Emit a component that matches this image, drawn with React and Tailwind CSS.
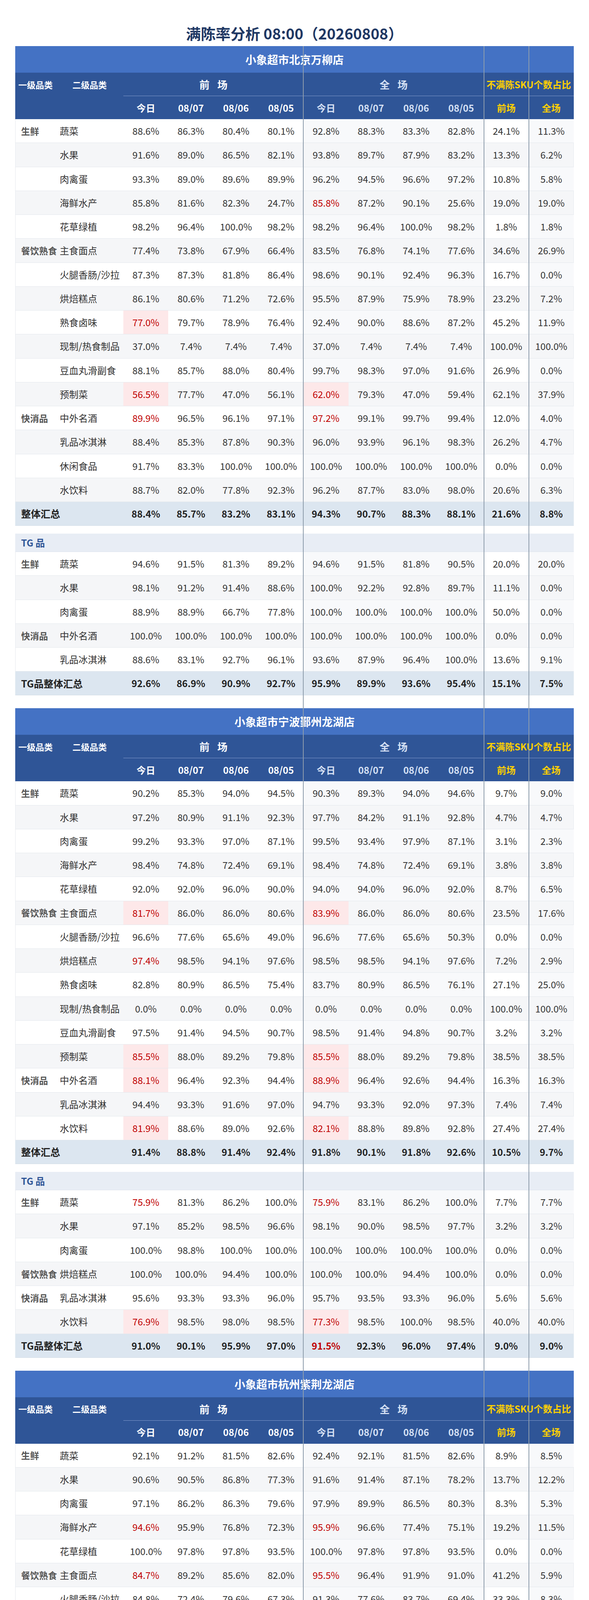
import React from "react";

const GRID = "grid grid-cols-[104px_173px_repeat(10,minmax(0,1fr))]";

const stores = [
  {
    name: "小象超市北京万柳店",
    main: [
      ["生鲜", "蔬菜", "88.6 86.3 80.4 80.1 92.8 88.3 83.3 82.8 24.1 11.3"],
      ["", "水果", "91.6 89.0 86.5 82.1 93.8 89.7 87.9 83.2 13.3 6.2"],
      ["", "肉禽蛋", "93.3 89.0 89.6 89.9 96.2 94.5 96.6 97.2 10.8 5.8"],
      ["", "海鲜水产", "85.8 81.6 82.3 24.7 85.8! 87.2 90.1 25.6 19.0 19.0"],
      ["", "花草绿植", "98.2 96.4 100.0 98.2 98.2 96.4 100.0 98.2 1.8 1.8"],
      ["餐饮熟食", "主食面点", "77.4 73.8 67.9 66.4 83.5 76.8 74.1 77.6 34.6 26.9"],
      ["", "火腿香肠/沙拉", "87.3 87.3 81.8 86.4 98.6 90.1 92.4 96.3 16.7 0.0"],
      ["", "烘焙糕点", "86.1 80.6 71.2 72.6 95.5 87.9 75.9 78.9 23.2 7.2"],
      ["", "熟食卤味", "77.0!* 79.7 78.9 76.4 92.4 90.0 88.6 87.2 45.2 11.9"],
      ["", "现制/热食制品", "37.0 7.4 7.4 7.4 37.0 7.4 7.4 7.4 100.0 100.0"],
      ["", "豆血丸滑副食", "88.1 85.7 88.0 80.4 99.7 98.3 97.0 91.6 26.9 0.0"],
      ["", "预制菜", "56.5!* 77.7 47.0 56.1 62.0!* 79.3 47.0 59.4 62.1 37.9"],
      ["快消品", "中外名酒", "89.9! 96.5 96.1 97.1 97.2! 99.1 99.7 99.4 12.0 4.0"],
      ["", "乳品冰淇淋", "88.4 85.3 87.8 90.3 96.0 93.9 96.1 98.3 26.2 4.7"],
      ["", "休闲食品", "91.7 83.3 100.0 100.0 100.0 100.0 100.0 100.0 0.0 0.0"],
      ["", "水饮料", "88.7 82.0 77.8 92.3 96.2 87.7 83.0 98.0 20.6 6.3"],
    ],
    total: "88.4 85.7 83.2 83.1 94.3 90.7 88.3 88.1 21.6 8.8",
    tg: [
      ["生鲜", "蔬菜", "94.6 91.5 81.3 89.2 94.6 91.5 81.8 90.5 20.0 20.0"],
      ["", "水果", "98.1 91.2 91.4 88.6 100.0 92.2 92.8 89.7 11.1 0.0"],
      ["", "肉禽蛋", "88.9 88.9 66.7 77.8 100.0 100.0 100.0 100.0 50.0 0.0"],
      ["快消品", "中外名酒", "100.0 100.0 100.0 100.0 100.0 100.0 100.0 100.0 0.0 0.0"],
      ["", "乳品冰淇淋", "88.6 83.1 92.7 96.1 93.6 87.9 96.4 100.0 13.6 9.1"],
    ],
    tgTotal: "92.6 86.9 90.9 92.7 95.9 89.9 93.6 95.4 15.1 7.5",
  },
  {
    name: "小象超市宁波鄞州龙湖店",
    main: [
      ["生鲜", "蔬菜", "90.2 85.3 94.0 94.5 90.3 89.3 94.0 94.6 9.7 9.0"],
      ["", "水果", "97.2 80.9 91.1 92.3 97.7 84.2 91.1 92.8 4.7 4.7"],
      ["", "肉禽蛋", "99.2 93.3 97.0 87.1 99.5 93.4 97.9 87.1 3.1 2.3"],
      ["", "海鲜水产", "98.4 74.8 72.4 69.1 98.4 74.8 72.4 69.1 3.8 3.8"],
      ["", "花草绿植", "92.0 92.0 96.0 90.0 94.0 94.0 96.0 92.0 8.7 6.5"],
      ["餐饮熟食", "主食面点", "81.7!* 86.0 86.0 80.6 83.9!* 86.0 86.0 80.6 23.5 17.6"],
      ["", "火腿香肠/沙拉", "96.6 77.6 65.6 49.0 96.6 77.6 65.6 50.3 0.0 0.0"],
      ["", "烘焙糕点", "97.4! 98.5 94.1 97.6 98.5 98.5 94.1 97.6 7.2 2.9"],
      ["", "熟食卤味", "82.8 80.9 86.5 75.4 83.7 80.9 86.5 76.1 27.1 25.0"],
      ["", "现制/热食制品", "0.0 0.0 0.0 0.0 0.0 0.0 0.0 0.0 100.0 100.0"],
      ["", "豆血丸滑副食", "97.5 91.4 94.5 90.7 98.5 91.4 94.8 90.7 3.2 3.2"],
      ["", "预制菜", "85.5!* 88.0 89.2 79.8 85.5!* 88.0 89.2 79.8 38.5 38.5"],
      ["快消品", "中外名酒", "88.1!* 96.4 92.3 94.4 88.9!* 96.4 92.6 94.4 16.3 16.3"],
      ["", "乳品冰淇淋", "94.4 93.3 91.6 97.0 94.7 93.3 92.0 97.3 7.4 7.4"],
      ["", "水饮料", "81.9!* 88.6 89.0 92.6 82.1!* 88.8 89.8 92.8 27.4 27.4"],
    ],
    total: "91.4 88.8 91.4 92.4 91.8 90.1 91.8 92.6 10.5 9.7",
    tg: [
      ["生鲜", "蔬菜", "75.9! 81.3 86.2 100.0 75.9! 83.1 86.2 100.0 7.7 7.7"],
      ["", "水果", "97.1 85.2 98.5 96.6 98.1 90.0 98.5 97.7 3.2 3.2"],
      ["", "肉禽蛋", "100.0 98.8 100.0 100.0 100.0 100.0 100.0 100.0 0.0 0.0"],
      ["餐饮熟食", "烘焙糕点", "100.0 100.0 94.4 100.0 100.0 100.0 94.4 100.0 0.0 0.0"],
      ["快消品", "乳品冰淇淋", "95.6 93.3 93.3 96.0 95.7 93.5 93.3 96.0 5.6 5.6"],
      ["", "水饮料", "76.9!* 98.5 98.0 98.5 77.3!* 98.5 100.0 98.5 40.0 40.0"],
    ],
    tgTotal: "91.0 90.1 95.9 97.0 91.5! 92.3 96.0 97.4 9.0 9.0",
  },
  {
    name: "小象超市杭州紫荆龙湖店",
    main: [
      ["生鲜", "蔬菜", "92.1 91.2 81.5 82.6 92.4 92.1 81.5 82.6 8.9 8.5"],
      ["", "水果", "90.6 90.5 86.8 77.3 91.6 91.4 87.1 78.2 13.7 12.2"],
      ["", "肉禽蛋", "97.1 86.2 86.3 79.6 97.9 89.9 86.5 80.3 8.3 5.3"],
      ["", "海鲜水产", "94.6! 95.9 76.8 72.3 95.9! 96.6 77.4 75.1 19.2 11.5"],
      ["", "花草绿植", "100.0 97.8 97.8 93.5 100.0 97.8 97.8 93.5 0.0 0.0"],
      ["餐饮熟食", "主食面点", "84.7! 89.2 85.6 82.0 95.5! 96.4 91.9 91.0 41.2 5.9"],
      ["", "火腿香肠/沙拉", "84.8 72.4 79.6 67.3 91.3 77.6 83.7 69.4 33.3 8.3"],
      ["", "烘焙糕点", "97.1 96.5 92.3 83.7 97.5 97.0 92.8 84.2 7.2 7.2"],
      ["", "熟食卤味", "80.5!* 80.7 84.1 77.6 88.8 87.5 89.8 86.2 31.9 21.3"],
      ["", "现制/热食制品", "16.7 16.7 16.7 16.7 16.7 16.7 16.7 16.7 100.0 100.0"],
      ["", "豆血丸滑副食", "94.6 93.9 94.9 94.1 98.1 96.5 96.1 95.6 22.6 3.2"],
      ["", "预制菜", "75.1 64.4 65.6 64.7 75.7 65.3 65.9 65.0 59.3 55.6"],
      ["快消品", "中外名酒", "95.6! 96.1 91.1 93.7 97.9 96.4 93.1 93.8 33.3 31.2"],
      ["", "乳品冰淇淋", "90.9 89.1 89.0 93.4 91.7 90.2 90.4 94.1 9.8 8.4"],
      ["", "水饮料", "94.9 88.1 86.5 87.9 95.5 88.5 87.7 88.7 5.3 5.3"],
    ],
    total: "92.0 89.3 86.7 86.2 93.2 90.6 87.9 87.2 13.9 10.8",
    tg: [
      ["生鲜", "蔬菜", "100.0 100.0 78.8 81.6 100.0 100.0 78.8 81.6 0.0 0.0"],
      ["", "水果", "99.8 96.9 90.0 81.1 100.0 96.9 90.0 83.5 0.0 0.0"],
      ["餐饮熟食", "熟食卤味", "92.3! 96.2 84.6 88.5 100.0 100.0 100.0 92.3 0.0 0.0"],
      ["", "预制菜", "70.6 23.5 35.3 23.5 70.6 23.5 35.3 23.5 100.0 100.0"],
      ["快消品", "乳品冰淇淋", "93.1 88.2 83.0 94.5 93.3 89.6 84.7 95.5 5.0 5.0"],
      ["", "水饮料", "98.9! 99.4 90.5 95.0 100.0 100.0 90.5 95.5 0.0 0.0"],
    ],
    tgTotal: "95.0 91.2 84.6 90.1 95.4 92.1 85.8 91.3 4.8 4.8",
  },
];

function parse(s) {
  return s.split(" ").map((t) => ({
    v: t.replace(/[!*]/g, "") + "%",
    red: t.includes("!"),
    pink: t.includes("*"),
  }));
}

function HeaderRows() {
  const dates = ["今日", "08/07", "08/06", "08/05"];
  return (
    <div className="bg-[#2f5597]">
      <div className={`${GRID} h-[60px]`}>
        <div className="flex items-center justify-center text-[22px] font-bold text-white whitespace-nowrap">一级品类</div>
        <div className="flex items-center justify-center text-[22px] font-bold text-white whitespace-nowrap">二级品类</div>
        <div className="col-span-4 flex items-center justify-center border-b border-[#8199cc] text-[26px] font-bold text-white [word-spacing:14px]">前 场</div>
        <div className="col-span-4 flex items-center justify-center border-b border-[#8199cc] text-[26px] font-bold text-[#d5e0f4] [word-spacing:14px]">全 场</div>
        <div className="col-span-2 flex items-center justify-center border-b border-[#8199cc] text-[24px] font-bold text-[#ffd000] whitespace-nowrap">不满陈SKU个数占比</div>
      </div>
      <div className={`${GRID} h-[59px]`}>
        <div className="col-span-2" />
        {dates.map((d) => (
          <div key={"a" + d} className="flex items-center justify-center text-[24px] font-bold text-white">{d}</div>
        ))}
        {dates.map((d) => (
          <div key={"b" + d} className="flex items-center justify-center text-[24px] font-bold text-[#d5e0f4]">{d}</div>
        ))}
        <div className="flex items-center justify-center text-[24px] font-bold text-[#ffd000]">前场</div>
        <div className="flex items-center justify-center text-[24px] font-bold text-[#ffd000]">全场</div>
      </div>
    </div>
  );
}

function BodyRow({ row, idx }) {
  const [l1, l2, vals] = row;
  const gray = idx % 2 === 1;
  const cells = parse(vals);
  return (
    <div
      className={`${GRID} h-[61.25px] overflow-hidden border-b border-[#e4e8ed] shadow-[inset_1px_0_0_#e6e9ee,inset_-1px_0_0_#e6e9ee] ${
        gray ? "bg-[#f5f6f8]" : "bg-white"
      }`}
    >
      <div className="flex items-center pl-[15px] text-[23px] font-bold text-[#555555] whitespace-nowrap">{l1}</div>
      <div className="flex items-center pl-[10px] text-[24px] text-[#333333] whitespace-nowrap">{l2}</div>
      {cells.map((c, j) => {
        const tint = !gray && ((j >= 4 && j <= 7) || j === 9);
        const bg = c.pink ? "bg-[#fde8e9]" : tint ? "bg-[#f8f9fb]" : "";
        return (
          <div
            key={j}
            className={`flex items-center justify-center text-[24px] whitespace-nowrap ${bg} ${
              c.red ? "text-[#c00000]" : "text-[#333333]"
            }`}
          >
            {c.v}
          </div>
        );
      })}
    </div>
  );
}

function TotalRow({ label, vals }) {
  const cells = parse(vals);
  return (
    <div className={`${GRID} h-[61px] overflow-hidden border-b border-[#d3dce6] bg-[#dce6f0]`}>
      <div className="col-span-2 flex items-center pl-[15px] text-[25px] font-bold text-[#222222] whitespace-nowrap">{label}</div>
      {cells.map((c, j) => (
        <div
          key={j}
          className={`flex items-center justify-center text-[24px] font-bold whitespace-nowrap ${
            c.red ? "text-[#c00000]" : "text-[#222222]"
          }`}
        >
          {c.v}
        </div>
      ))}
    </div>
  );
}

function Store({ store, first }) {
  return (
    <section className={first ? "" : "mt-[33px]"}>
      <div className="flex h-[68px] items-center justify-center bg-[#4472c4] text-[28px] font-bold text-white">{store.name}</div>
      <HeaderRows />
      {store.main.map((r, i) => (
        <BodyRow key={i} row={r} idx={i} />
      ))}
      <TotalRow label="整体汇总" vals={store.total} />
      <div className="mt-[20px]">
        <div className="flex h-[47px] items-center border-b border-[#dde3ec] bg-[#e8edf5] pl-[15px] text-[24px] font-bold text-[#2f5597]">TG 品</div>
        {store.tg.map((r, i) => (
          <BodyRow key={i} row={r} idx={i} />
        ))}
        <TotalRow label="TG品整体汇总" vals={store.tgTotal} />
      </div>
    </section>
  );
}

export default function App() {
  return (
    <div className="w-full bg-white font-['Noto_Sans_CJK_SC','Noto_Sans',sans-serif]">
      <h1 className="pt-[60px] pb-[8px] text-center text-[38px] font-bold leading-[50px] text-[#1f3864]">满陈率分析 08:00（20260808）</h1>
      <div className="relative mx-auto w-[1431px]">
        {stores.map((s, i) => (
          <Store key={s.name} store={s} first={i === 0} />
        ))}
        <div className="pointer-events-none absolute inset-y-0 left-[737px] z-10 w-[2px] bg-[#8e9dac]" />
        <div className="pointer-events-none absolute inset-y-0 left-[1200px] z-10 w-[2px] bg-[#8e9dac]" />
        <div className="pointer-events-none absolute inset-y-0 left-[1315px] z-10 w-[2px] bg-[#8e9dac]" />
      </div>
    </div>
  );
}
